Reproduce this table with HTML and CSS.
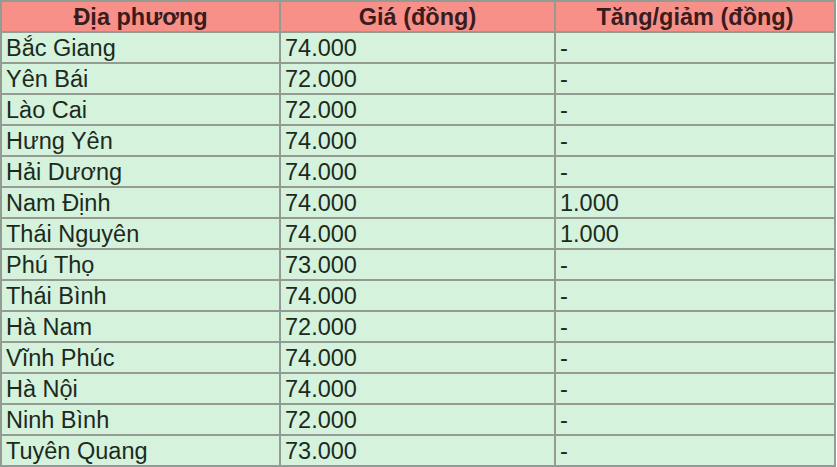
FILE: index.html
```html
<!DOCTYPE html>
<html lang="vi">
<head>
<meta charset="utf-8">
<link rel="stylesheet" href="styles.css">
</head>
<body>
<table class="price-table">
  <thead>
    <tr><th class="c1">Địa phương</th><th class="c2">Giá (đồng)</th><th class="c3">Tăng/giảm (đồng)</th></tr>
  </thead>
  <tbody>
    <tr><td>Bắc Giang</td><td>74.000</td><td>-</td></tr>
    <tr><td>Yên Bái</td><td>72.000</td><td>-</td></tr>
    <tr><td>Lào Cai</td><td>72.000</td><td>-</td></tr>
    <tr><td>Hưng Yên</td><td>74.000</td><td>-</td></tr>
    <tr><td>Hải Dương</td><td>74.000</td><td>-</td></tr>
    <tr><td>Nam Định</td><td>74.000</td><td>1.000</td></tr>
    <tr><td>Thái Nguyên</td><td>74.000</td><td>1.000</td></tr>
    <tr><td>Phú Thọ</td><td>73.000</td><td>-</td></tr>
    <tr><td>Thái Bình</td><td>74.000</td><td>-</td></tr>
    <tr><td>Hà Nam</td><td>72.000</td><td>-</td></tr>
    <tr><td>Vĩnh Phúc</td><td>74.000</td><td>-</td></tr>
    <tr><td>Hà Nội</td><td>74.000</td><td>-</td></tr>
    <tr><td>Ninh Bình</td><td>72.000</td><td>-</td></tr>
    <tr><td>Tuyên Quang</td><td>73.000</td><td>-</td></tr>
  </tbody>
</table>
</body>
</html>
```

FILE: styles.css
```css
html, body {
  margin: 0;
  padding: 0;
  background: #ffffff;
}
.price-table {
  border-collapse: collapse;
  width: 834px;
  table-layout: fixed;
  font-family: "Liberation Sans", Arial, sans-serif;
  font-size: 23.5px;
}
.price-table th,
.price-table td {
  border: 2px solid #939b93;
  height: 29px;
  padding: 1px 4px 0;
  line-height: 28px;
  box-sizing: border-box;
  white-space: nowrap;
}
.price-table th {
  background: #f8908a;
  color: #3a1c1c;
  font-weight: bold;
  text-align: center;
  font-size: 23.5px;
}
.price-table td {
  background: #d4f2dc;
  color: #1c2a1e;
  text-align: left;
}
.c1 { width: 279px; }
.c2 { width: 275px; }
.c3 { width: 280px; }
```
